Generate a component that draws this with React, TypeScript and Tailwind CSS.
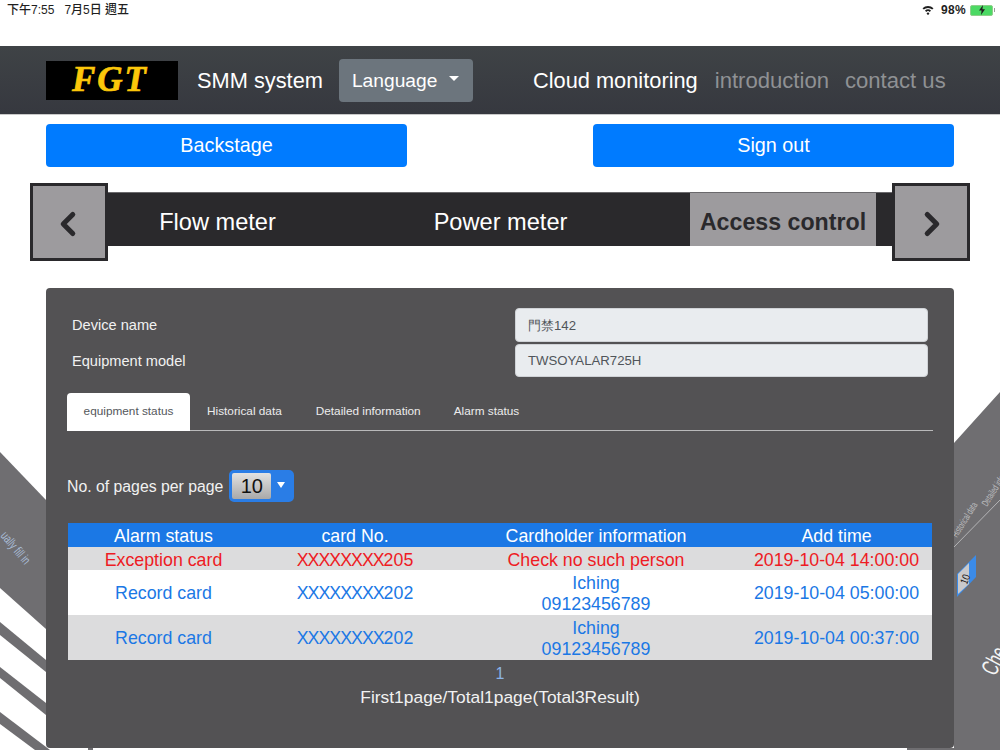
import { ChevronLeft, ChevronRight } from "lucide-react";

const sans = "font-['Liberation_Sans',Arial,sans-serif]";

const rows = [
  { status: "Exception card", card: "205", holder: ["Check no such person"], time: "2019-10-04 14:00:00", alert: true },
  { status: "Record card", card: "202", holder: ["Iching", "09123456789"], time: "2019-10-04 05:00:00", alert: false },
  { status: "Record card", card: "202", holder: ["Iching", "09123456789"], time: "2019-10-04 00:37:00", alert: false },
];

// the neighbouring carousel slides, seen in perspective behind the panel
function SideSlides() {
  return (
    <svg className="absolute inset-0" width="1000" height="750" viewBox="0 0 1000 750">
      <polygon points="0,452 46,500 46,629 0,588" fill="#6f6e71" />
      <polygon points="0,622 46,660 46,672 0,635" fill="#6f6e71" />
      <polygon points="0,667 46,703 46,715 0,678" fill="#6f6e71" />
      <polygon points="0,712 50,750 35,750 0,724" fill="#6f6e71" />
      <text transform="translate(0,536) rotate(50) scale(0.68,1)" fontSize="13" fill="#a9bcd6" fontFamily="Liberation Sans">ually fill in</text>

      <polygon points="954,443 1000,392 1000,750 907,750 907,748 954,748" fill="#6f6e71" />
      <line x1="954" y1="547" x2="1000" y2="500" stroke="#b4b4b6" strokeWidth="1" />
      <text transform="translate(957,538) rotate(-58) scale(0.62,1)" fontSize="10" fill="#bdbdbf" fontFamily="Liberation Sans">Historical data</text>
      <text transform="translate(987,507) rotate(-58) scale(0.62,1)" fontSize="10" fill="#bdbdbf" fontFamily="Liberation Sans">Detailed info</text>
      <polygon points="957,574 976,555 976,577 957,597" fill="#3b8be8" />
      <polygon points="958,574 969,563 969,584 958,594" fill="#c9c9cb" />
      <text transform="translate(967,585) rotate(-70) scale(0.8,1)" fontSize="11" fill="#222" fontFamily="Liberation Sans">10</text>
      <text transform="translate(995,677) rotate(-62) scale(0.7,1.1)" fontSize="22" fill="#f4f4f4" fontFamily="Liberation Sans">Che</text>
      <rect x="88" y="747" width="5" height="3" fill="#6f6e71" />
    </svg>
  );
}

function StatusBar() {
  return (
    <div className="flex h-[46px] items-start justify-between pl-[7px] pr-[5px] pt-[2px] text-[12px] leading-[16px] text-[#1f1f1f]">
      <span className="font-['Liberation_Sans','Noto_Sans_CJK_TC',sans-serif] font-medium whitespace-pre">
        下午7:55{"   "}7月5日 週五
      </span>
      <div className="flex items-center">
        <svg width="12" height="10" viewBox="0 0 12 10" className="mr-[7px]">
          <path d="M0.5 3.2 A8 8 0 0 1 11.5 3.2 L10.2 4.6 A6 6 0 0 0 1.8 4.6 Z" fill="#1f1f1f" />
          <path d="M3 5.6 A4.4 4.4 0 0 1 9 5.6 L7.8 6.9 A2.6 2.6 0 0 0 4.2 6.9 Z" fill="#1f1f1f" />
          <circle cx="6" cy="8.6" r="1.2" fill="#1f1f1f" />
        </svg>
        <span className="font-bold tracking-[0.3px]">98%</span>
        <div className="ml-[4px] flex h-[11px] w-[23px] items-center justify-center rounded-[2px] border border-[#8fcf8a] bg-[#4cd964]">
          <svg width="8" height="10" viewBox="0 0 8 10">
            <path d="M5 0 L1 5.6 H3.6 L3 10 L7 4.2 H4.4 Z" fill="#1f1f1f" />
          </svg>
        </div>
        <div className="ml-px h-[4px] w-px bg-[#9a9a9a]" />
      </div>
    </div>
  );
}

function Navbar() {
  return (
    <nav className="flex h-[69px] items-center border-b border-[#c9c9c9] bg-gradient-to-b from-[#3f4346] to-[#36383f] pl-[46px] text-[21.8px]">
      <div className="flex h-[39px] w-[132px] items-center justify-center bg-black pr-[4px] font-['Liberation_Serif',serif] text-[35px] font-bold italic tracking-[2px] text-[#fcc70a] [-webkit-text-stroke:0.7px_#fcc70a]">
        FGT
      </div>
      <span className="ml-[19px] mt-[2px] text-white">SMM system</span>
      <button className="ml-[16px] flex h-[43px] w-[134px] items-center rounded-[4px] bg-[#6c757d] pl-[13px] pt-[2px] text-[19.2px] text-white">
        Language
        <span className="ml-[12px] mb-[5px] h-0 w-0 border-x-[5.5px] border-t-[5.5px] border-x-transparent border-t-white" />
      </button>
      <a className="ml-[60px] mt-[2px] text-white">Cloud monitoring</a>
      <a className="ml-[17px] mt-[2px] text-[22.1px] text-[#8f9194]">introduction</a>
      <a className="ml-[16px] mt-[2px] text-[22.1px] text-[#8f9194]">contact us</a>
    </nav>
  );
}

function ArrowBox({ children }: { children: React.ReactNode }) {
  return (
    <div className="z-10 flex h-[78px] w-[78px] shrink-0 items-center justify-center border-[3px] border-[#2a292c] bg-[#9d9b9e] pt-[4px] text-[#2a292c]">
      {children}
    </div>
  );
}

function Carousel() {
  return (
    <div className="mx-[30px] mt-[16px] flex h-[78px] items-start">
      <ArrowBox>
        <ChevronLeft size={38} strokeWidth={3.2} className="-ml-[2px]" />
      </ArrowBox>
      <div className="mt-[9px] flex h-[54px] flex-1 items-center border-t border-[#6a696c] bg-[#2a292c] text-[23.6px]">
        <div className="mt-[6px] w-[219px] text-center text-white">Flow meter</div>
        <div className="mt-[6px] w-[345px] pl-[2px] text-center text-white">Power meter</div>
        <div className="ml-[18px] flex h-full w-[186px] items-center justify-center bg-[#9d9b9e] pt-[6px] text-[23.2px] font-bold text-[#2a292c]">
          Access control
        </div>
      </div>
      <ArrowBox>
        <ChevronRight size={38} strokeWidth={3.2} className="ml-[2px]" />
      </ArrowBox>
    </div>
  );
}

function Field({ label, value, height }: { label: string; value: string; height: string }) {
  return (
    <div className="flex items-center justify-between pl-[26px] pr-[26px] text-[14.6px]">
      <span className="pt-[2px] text-[#f1f1f1]">{label}</span>
      <div className={`flex w-[413px] items-center rounded-[4px] border border-[#cfd2d6] bg-[#e9ecef] pl-[12px] pt-[1px] text-[13.2px] text-[#50555a] ${height}`}>
        {value}
      </div>
    </div>
  );
}

function Tabs() {
  return (
    <div className="mx-[21px] mt-[16px] flex h-[38px] border-b border-[#b9b9ba] text-[11.8px] text-[#ececec]">
      <div className="flex h-[38px] w-[123px] items-center justify-center rounded-t-[4px] bg-white text-[#55585c]">
        equipment status
      </div>
      <div className="ml-[17px] flex items-center">Historical data</div>
      <div className="ml-[34px] flex items-center">Detailed information</div>
      <div className="ml-[33px] flex items-center">Alarm status</div>
    </div>
  );
}

function PageSize() {
  return (
    <div className="ml-[21px] mt-[39px] flex items-center text-[15.8px] text-[#f1f1f1]">
      <span className="pt-[1px]">No. of pages per page</span>
      <div className="ml-[6px] flex h-[32px] w-[65px] rounded-[5px] border-[3px] border-[#2a7de6] bg-[#2a7de6]">
        <div className="flex w-[39px] items-center justify-center rounded-[2px] bg-gradient-to-b from-[#e2e2e2] to-[#a9a9a9] text-[20px] text-[#111]">
          10
        </div>
        <div className="flex flex-1 items-center justify-center">
          <span className="mb-[3px] h-0 w-0 border-x-[4px] border-t-[6px] border-x-transparent border-t-white" />
        </div>
      </div>
    </div>
  );
}

function AlarmTable() {
  return (
    <table className="ml-[22px] mt-[21px] w-[864px] table-fixed text-center text-[17.8px] leading-[21px]">
      <colgroup>
        <col className="w-[191px]" />
        <col className="w-[192px]" />
        <col className="w-[290px]" />
        <col className="w-[191px]" />
      </colgroup>
      <thead>
        <tr className="h-[24px] bg-[#1b78e5] text-white">
          <th className="pt-[2px] font-normal">Alarm status</th>
          <th className="pt-[2px] font-normal">card No.</th>
          <th className="pt-[2px] font-normal">Cardholder information</th>
          <th className="pt-[2px] font-normal">Add time</th>
        </tr>
      </thead>
      <tbody>
        {rows.map((row, i) => {
          const cell = row.alert ? "pt-[3px] leading-[20px]" : "pt-[2px]";
          return (
            <tr
              key={i}
              className={`${row.alert ? "h-[23px] text-[#ee1b24]" : "h-[45px] text-[#1b78e5]"} ${i % 2 === 0 ? "bg-[#dcdcdd]" : "bg-white"}`}
            >
              <td className={cell}>{row.status}</td>
              <td className={cell}>
                <span className="tracking-[-1px]">XXXXXXXX</span>
                {row.card}
              </td>
              <td className={cell}>
                {row.holder.map((line) => (
                  <div key={line}>{line}</div>
                ))}
              </td>
              <td className={cell}>{row.time}</td>
            </tr>
          );
        })}
      </tbody>
    </table>
  );
}

export default function App() {
  return (
    <div className={`relative h-[750px] w-[1000px] overflow-hidden bg-white ${sans}`}>
      <SideSlides />
      <div className="relative">
        <StatusBar />
        <Navbar />
        <div className="mt-[9px] flex justify-between px-[46px] text-[19.8px] text-white">
          <button className="h-[43px] w-[361px] rounded-[4px] bg-[#007bff]">Backstage</button>
          <button className="h-[43px] w-[361px] rounded-[4px] bg-[#007bff]">Sign out</button>
        </div>
        <Carousel />
        <section className="ml-[46px] mt-[27px] h-[460px] w-[908px] rounded-[4px] bg-[#535254] pt-[20px]">
          <Field label="Device name" value="門禁142" height="h-[34px]" />
          <div className="h-[2px]" />
          <Field label="Equipment model" value="TWSOYALAR725H" height="h-[33px]" />
          <Tabs />
          <PageSize />
          <AlarmTable />
          <div className="mt-[4px] text-center text-[16px] leading-[20px] text-[#8ab4e8]">1</div>
          <div className="mt-[3px] text-center text-[17.4px] leading-[20px] text-[#f1f1f1]">
            First1page/Total1page(Total3Result)
          </div>
        </section>
      </div>
    </div>
  );
}
